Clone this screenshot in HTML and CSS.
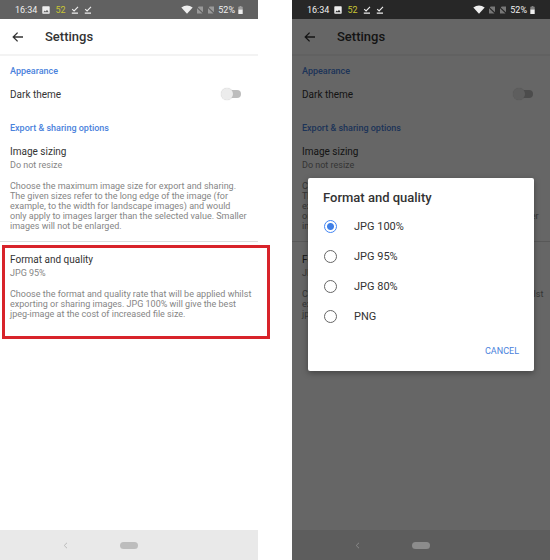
FILE: index.html
```html
<!DOCTYPE html>
<html lang="en">
<head>
<meta charset="utf-8">
<meta name="viewport" content="width=device-width, initial-scale=1">
<title>Settings</title>
<link rel="stylesheet" href="styles.css">
</head>
<body>
<svg class="defs" aria-hidden="true">
  <symbol id="picture" viewBox="0 0 8 8"><path fill="currentColor" fill-rule="evenodd" d="M1 .3h6q.7 0 .7.7v6q0 .7-.7.7H1Q.3 7.7.3 7V1Q.3.3 1 .3zM1.3 6.2h5.4L5 3.8 3.7 5.4l-.9-1z"/></symbol>
  <symbol id="done" viewBox="0 0 8 8"><path fill="none" stroke="currentColor" stroke-width="1.1" d="M1.2 3.1l1.9 1.9L7 .9M.8 7.1h6.2"/></symbol>
  <symbol id="wifi" viewBox="0 0 12 9"><path fill="currentColor" d="M.3 2.5Q6-1.6 11.7 2.5L6 8.8z"/></symbol>
  <symbol id="nosim" viewBox="0 0 8 8"><path fill="currentColor" d="M2.7.5H7v5.7L1.8 1.4zM1 2.2l5.5 5.3H1z"/></symbol>
  <symbol id="battery" viewBox="0 0 5 8"><path fill="currentColor" opacity=".45" d="M1.6 0h1.8v.8h1.3V4H.3V.8h1.3z"/><path fill="currentColor" d="M.3 3.6h4.4V8H.3z"/></symbol>
  <symbol id="arrow" viewBox="0 0 12 12"><path fill="none" stroke="currentColor" stroke-width="1.3" d="M11 6H1.4M5.6 1.6L1.2 6l4.4 4.4"/></symbol>
  <symbol id="chevron" viewBox="0 0 5 7"><path fill="none" stroke="currentColor" d="M4 .8L1.2 3.5 4 6.2"/></symbol>
</svg>
<div class="screens">
  <div class="phone">
    <div class="status">
      <span>16:34</span><svg class="ico"><use href="#picture"/></svg><span class="temp">52</span><svg class="ico"><use href="#done"/></svg><svg class="ico"><use href="#done"/></svg>
      <span class="system"><svg class="wifi"><use href="#wifi"/></svg><svg class="ico sim"><use href="#nosim"/></svg><svg class="ico sim"><use href="#nosim"/></svg><span>52%</span><svg class="battery"><use href="#battery"/></svg></span>
    </div>
    <header class="appbar">
      <button class="back" aria-label="Back"><svg><use href="#arrow"/></svg></button>
      <h1>Settings</h1>
    </header>
    <main class="content">
      <section class="group">
        <h2>Appearance</h2>
        <label class="switch-row"><span>Dark theme</span><input type="checkbox" class="switch"></label>
        <h2>Export &amp; sharing options</h2>
        <h3>Image sizing</h3>
        <p class="value">Do not resize</p>
        <p class="description">Choose the maximum image size for export and sharing.<br>The given sizes refer to the long edge of the image (for<br>example, to the width for landscape images) and would<br>only apply to images larger than the selected value. Smaller<br>images will not be enlarged.</p>
      </section>
      <section class="group divided marked">
        <h3>Format and quality</h3>
        <p class="value">JPG 95%</p>
        <p class="description">Choose the format and quality rate that will be applied whilst<br>exporting or sharing images. JPG 100% will give the best<br>jpeg-image at the cost of increased file size.</p>
      </section>
    </main>
    <nav class="navbar">
      <button class="nav-back" aria-label="System back"><svg><use href="#chevron"/></svg></button>
      <button class="home" aria-label="Home"></button>
    </nav>
  </div>

  <div class="phone dimmed">
    <div class="status">
      <span>16:34</span><svg class="ico"><use href="#picture"/></svg><span class="temp">52</span><svg class="ico"><use href="#done"/></svg><svg class="ico"><use href="#done"/></svg>
      <span class="system"><svg class="wifi"><use href="#wifi"/></svg><svg class="ico sim"><use href="#nosim"/></svg><svg class="ico sim"><use href="#nosim"/></svg><span>52%</span><svg class="battery"><use href="#battery"/></svg></span>
    </div>
    <header class="appbar">
      <button class="back" aria-label="Back"><svg><use href="#arrow"/></svg></button>
      <h1>Settings</h1>
    </header>
    <main class="content">
      <section class="group">
        <h2>Appearance</h2>
        <label class="switch-row"><span>Dark theme</span><input type="checkbox" class="switch"></label>
        <h2>Export &amp; sharing options</h2>
        <h3>Image sizing</h3>
        <p class="value">Do not resize</p>
        <p class="description">Choose the maximum image size for export and sharing.<br>The given sizes refer to the long edge of the image (for<br>example, to the width for landscape images) and would<br>only apply to images larger than the selected value. Smaller<br>images will not be enlarged.</p>
      </section>
      <section class="group divided">
        <h3>Format and quality</h3>
        <p class="value">JPG 95%</p>
        <p class="description">Choose the format and quality rate that will be applied whilst<br>exporting or sharing images. JPG 100% will give the best<br>jpeg-image at the cost of increased file size.</p>
      </section>
    </main>
    <nav class="navbar">
      <button class="nav-back" aria-label="System back"><svg><use href="#chevron"/></svg></button>
      <button class="home" aria-label="Home"></button>
    </nav>
    <div class="scrim">
      <form class="dialog" role="dialog" aria-labelledby="dialog-title">
        <h2 id="dialog-title">Format and quality</h2>
        <label class="option"><input type="radio" name="format" checked><span>JPG 100%</span></label>
        <label class="option"><input type="radio" name="format"><span>JPG 95%</span></label>
        <label class="option"><input type="radio" name="format"><span>JPG 80%</span></label>
        <label class="option"><input type="radio" name="format"><span>PNG</span></label>
        <div class="actions"><button type="button">CANCEL</button></div>
      </form>
    </div>
  </div>
</div>
</body>
</html>
```
FILE: styles.css
```css
* { box-sizing: border-box; }
body { margin: 0; background: #fff; font-family: Roboto, "Liberation Sans", sans-serif; color: #333; }
h1, h2, h3, p { margin: 0; }
button { border: 0; padding: 0; background: none; font: inherit; color: inherit; }
input { appearance: none; margin: 0; }
svg { display: block; flex: none; }
.defs { position: absolute; width: 0; height: 0; }

.screens { display: grid; grid-template-columns: 1fr 1fr; gap: 34px; min-height: 100vh; }
.phone { position: relative; display: flex; flex-direction: column; min-width: 0; white-space: nowrap; }

.status { display: flex; align-items: center; gap: 5px; height: 19px; padding: 0 15px; background: #616161; color: #eee; font-size: 9px; }
.ico { width: 8px; height: 8px; }
.temp { color: #c8c534; }
.system { display: flex; align-items: center; gap: 3px; margin-left: auto; }
.wifi { width: 12px; height: 9px; }
.sim { opacity: .4; }
.battery { width: 5px; height: 8px; }

.appbar { display: flex; align-items: center; gap: 21px; height: 37px; padding: 0 12px; border-bottom: 2px solid #f3f3f3; }
.back svg { width: 12px; height: 12px; }
.appbar h1 { font-size: 13px; font-weight: 500; }

.content { flex: 1; }
.group { padding: 7px 10px 10px; }
.group h2 { font-size: 9px; font-weight: 500; line-height: 16px; color: #4a82dc; }
.group h3 { font-size: 10px; font-weight: 400; line-height: 16px; }
.switch-row { display: flex; align-items: center; justify-content: space-between; height: 30px; margin-bottom: 11px; padding-right: 7px; font-size: 10px; }
.switch-row + h2 { margin-bottom: 8px; }
.switch { position: relative; width: 16px; height: 8px; border-radius: 4px; background: #bdbdbd; }
.switch::before { content: ""; position: absolute; left: -4px; top: -2px; width: 12px; height: 12px; border-radius: 50%; background: #ececec; box-shadow: 0 0 1px #bbb; }
.value { font-size: 9px; line-height: 10px; color: #858585; }
.description { margin-top: 11px; font-size: 9px; line-height: 10px; color: #858585; }
.divided { border-top: 1px solid #ddd; padding-top: 10px; }
.marked { position: relative; }
.marked::after { content: ""; position: absolute; inset: 3px -12px -10px 2px; border: 3px solid #d8232a; }

.navbar { display: grid; grid-template-columns: 1fr auto 1fr; align-items: center; height: 30px; background: #e9e9e9; color: #bbb; }
.nav-back { justify-self: center; padding-left: 10px; }
.nav-back svg { width: 5px; height: 7px; }
.home { width: 18px; height: 7px; border-radius: 4px; background: #bdbdbd; }

.dimmed .status, .dimmed .navbar { position: relative; z-index: 2; }
.dimmed .status { background: #272727; }
.dimmed .navbar { background: #5d5d5d; color: #8a8a8a; }
.dimmed .home { background: #8c8c8c; }
.scrim { position: absolute; inset: 0; display: flex; align-items: center; justify-content: center; padding: 19px 16px 30px; background: rgba(0, 0, 0, .6); }
.dialog { width: 100%; padding: 12px 15px 10px; border-radius: 2px; background: #fff; box-shadow: 0 2px 6px rgba(0, 0, 0, .35); color: #333; }
.dialog h2 { margin-bottom: 5px; font-size: 13px; font-weight: 500; line-height: 16px; }
.option { display: flex; align-items: center; gap: 17px; height: 30px; font-size: 11px; }
.option input { width: 13px; height: 13px; margin-left: 1px; border: 1px solid #666; border-radius: 50%; }
.option input:checked { border-color: #4285f4; background: radial-gradient(circle, #3f7fe6 3px, #fff 4px); }
.actions { display: flex; justify-content: flex-end; margin-top: 10px; }
.actions button { height: 20px; font-size: 9px; color: #4a82dc; }
```
